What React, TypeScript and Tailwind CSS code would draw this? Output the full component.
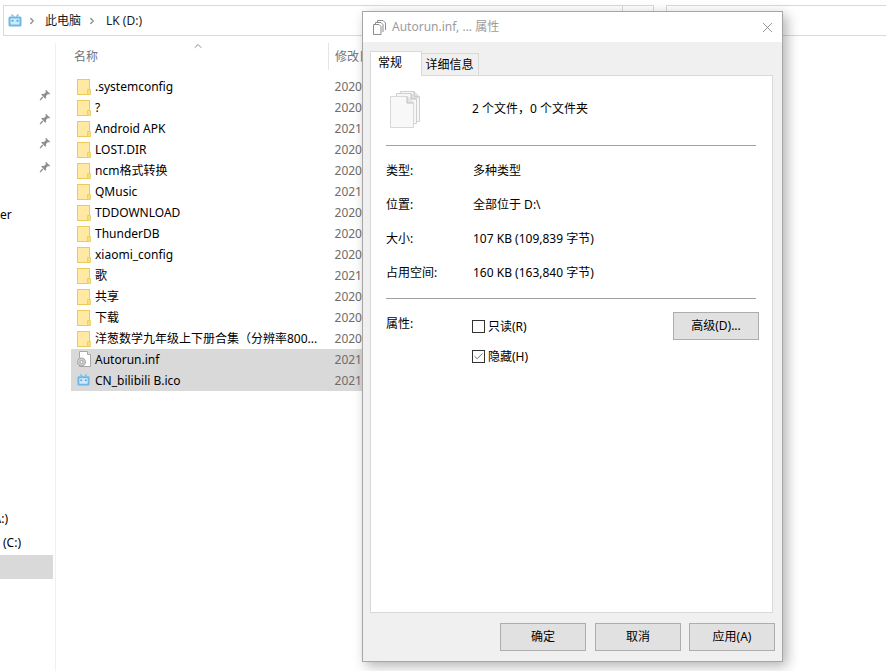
import { ChevronRight, ChevronUp, X, Check } from "lucide-react";
import React from "react";

const folders = [
  { name: ".systemconfig", date: "2020" },
  { name: "?", date: "2020" },
  { name: "Android APK", date: "2021" },
  { name: "LOST.DIR", date: "2020" },
  { name: "ncm格式转换", date: "2020" },
  { name: "QMusic", date: "2021" },
  { name: "TDDOWNLOAD", date: "2020" },
  { name: "ThunderDB", date: "2020" },
  { name: "xiaomi_config", date: "2020" },
  { name: "歌", date: "2021" },
  { name: "共享", date: "2020" },
  { name: "下载", date: "2020" },
  { name: "洋葱数学九年级上下册合集（分辨率800...", date: "2020" },
];

const details = [
  { label: "类型:", value: "多种类型" },
  { label: "位置:", value: "全部位于 D:\\" },
  { label: "大小:", value: "107 KB (109,839 字节)" },
  { label: "占用空间:", value: "160 KB (163,840 字节)" },
];

const BiliIcon = ({ size = 14 }: { size?: number }) => (
  <svg width={size} height={size} viewBox="0 0 14 14" fill="none">
    <path d="M3.5 0.5 L5.5 2.5 M10.5 0.5 L8.5 2.5" stroke="#6db8e6" strokeWidth="1.2" />
    <rect x="0.5" y="2.5" width="13" height="10" rx="1.5" fill="#6db8e6" />
    <rect x="2.5" y="4.5" width="9" height="6" fill="#cfe9f8" />
    <rect x="3.5" y="6" width="2" height="1.5" fill="#4a9fd8" />
    <rect x="8.5" y="6" width="2" height="1.5" fill="#4a9fd8" />
  </svg>
);

const FolderIcon = () => (
  <svg width="14" height="16" viewBox="0 0 14 16" fill="none">
    <rect x="0.5" y="0.5" width="12" height="15" fill="#ffe9a3" stroke="#eccb5b" />
    <path d="M10.5 15.5 V10.5 H13.5 V15.5 Z" fill="#f7dc82" stroke="#eccb5b" strokeWidth="0.8" />
  </svg>
);

const PinIcon = () => (
  <svg width="12" height="12" viewBox="0 0 12 12" fill="#8f8f8f">
    <path d="M7 0.8 L11.2 5 L10.2 5.6 L9 5 L7 7 L7.2 9 L6.4 9.8 L2.2 5.6 L3 4.8 L5 5 L7 3 L6.4 1.8 Z" />
    <path d="M4 8 L1 11" stroke="#8f8f8f" strokeWidth="1.2" />
  </svg>
);

const GearFileIcon = () => (
  <svg width="16" height="17" viewBox="0 0 16 17" fill="none">
    <path d="M3.5 0.5 H11.5 L14.5 3.5 V15.5 H3.5 Z" fill="#ffffff" stroke="#a8a8a8" />
    <path d="M11.5 0.5 V3.5 H14.5" stroke="#a8a8a8" fill="#eeeeee" />
    <circle cx="5.5" cy="11" r="4" fill="#cdcdcd" stroke="#8a8a8a" strokeDasharray="1.6 0.8" />
    <circle cx="5.5" cy="11" r="1.5" fill="#ffffff" stroke="#8a8a8a" strokeWidth="0.7" />
  </svg>
);

const CopyIcon = () => (
  <svg width="13" height="15" viewBox="0 0 13 15" fill="none" stroke="#8c8c8c">
    <path d="M0.5 4.5 H6 L8 6.5 V14.5 H0.5 Z" fill="#ffffff" />
    <path d="M2.5 4 V2.5 H8 L10 4.5 V12" />
    <path d="M4.5 2 V0.5 H10 L12.5 3 V10" />
  </svg>
);

const FilesIcon = () => (
  <svg width="31" height="37" viewBox="0 0 31 37" fill="none">
    <path d="M10.5 0.5 H24 L29.5 6 V30.5 H10.5 Z" fill="#f7f7f7" stroke="#d0d0d0" />
    <path d="M24 0.5 V6 H29.5" fill="#e2e2e2" stroke="#bdbdbd" />
    <path d="M6.5 2.5 H21 L26.5 8 V32.5 H6.5 Z" fill="#f7f7f7" stroke="#d0d0d0" />
    <path d="M21 2.5 V8 H26.5" fill="#e2e2e2" stroke="#bdbdbd" />
    <path d="M0.5 5.5 H17 L23.5 12 V36.5 H0.5 Z" fill="#f8f8f8" stroke="#d8d8d8" />
    <path d="M17 5.5 V12 H23.5" fill="#e4e4e4" stroke="#bdbdbd" />
  </svg>
);

const DialogButton = ({ label, className = "" }: { label: string; className?: string }) => (
  <button className={`h-[28px] w-[86px] bg-[#e1e1e1] border border-[#adadad] text-[12px] text-black ${className}`}>
    {label}
  </button>
);

const FileRow = ({
  icon,
  name,
  date,
  selected,
}: {
  icon: React.ReactNode;
  name: string;
  date: string;
  selected?: boolean;
}) => (
  <div className={`h-[21px] flex items-center ${selected ? "bg-[#d9d9d9]" : ""}`}>
    <div className="w-[24px] flex justify-center shrink-0 pl-[1px]">{icon}</div>
    <div className="w-[240px] text-black whitespace-nowrap">{name}</div>
    <div className="text-[#6d6d6d]">{date}</div>
  </div>
);

export default function App() {
  return (
    <div
      className="relative w-[886px] h-[671px] overflow-hidden bg-white text-[12px] leading-none text-black"
      style={{ fontFamily: '"Noto Sans", "Noto Sans CJK SC", sans-serif' }}
    >
      {/* address bar */}
      <div className="flex h-[43px] pt-[5px] pl-[3px]">
        <div className="w-[620px] h-[31px] border border-[#d9d9d9] flex items-center pl-[4px] text-[#1a1a1a]">
          <BiliIcon />
          <ChevronRight size={10} strokeWidth={3} className="text-[#8a8a8a] ml-[5px] mr-[8px]" />
          <span>此电脑</span>
          <ChevronRight size={10} strokeWidth={3} className="text-[#8a8a8a] ml-[6px] mr-[9px]" />
          <span>LK (D:)</span>
        </div>
        <div className="w-[31px] h-[31px] border border-l-0 border-[#d9d9d9]" />
        <div className="w-[220px] h-[31px] border border-r-0 border-[#d9d9d9] ml-[12px]" />
      </div>

      <div className="flex h-[628px]">
        {/* nav pane */}
        <div className="w-[56px] shrink-0 border-r border-[#f0f0f0] pt-[40px]">
          {[0, 1, 2, 3].map((i) => (
            <div key={i} className="h-[24px] flex items-center justify-end pr-[4px]">
              <PinIcon />
            </div>
          ))}
          <div className="h-[24px] mt-[24px] flex items-center text-black">er</div>
          <div className="h-[24px] mt-[280px] flex items-center justify-end pr-[47px] overflow-hidden whitespace-nowrap">
            A:)
          </div>
          <div className="h-[24px] flex items-center pl-[3px]">(C:)</div>
          <div className="h-[24px] w-[53px] bg-[#d9d9d9]" />
        </div>

        {/* file list */}
        <div className="w-[306px] shrink-0 pl-[15px]">
          <div className="relative h-[27px] flex items-center">
            <span className="pl-[3px] text-[#6a7583]">名称</span>
            <ChevronUp size={12} className="absolute left-[121px] top-[-3px] text-[#8a8a8a]" />
            <div className="absolute left-[257px] top-0 h-[27px] border-l border-[#e5e5e5] pl-[6px] flex items-center text-[#6a7583] whitespace-nowrap">
              修改日期
            </div>
          </div>
          <div className="pt-[6px]">
            {folders.map((f) => (
              <FileRow key={f.name} icon={<FolderIcon />} name={f.name} date={f.date} />
            ))}
            <FileRow icon={<GearFileIcon />} name="Autorun.inf" date="2021" selected />
            <FileRow icon={<BiliIcon size={13} />} name="CN_bilibili B.ico" date="2021" selected />
          </div>
        </div>
      </div>

      {/* properties window */}
      <div className="absolute left-[362px] top-[11px] w-[421px] h-[651px] flex flex-col border border-[#a6a6a6] bg-[#f0f0f0] shadow-[4px_4px_12px_rgba(0,0,0,0.3)]">
        <div className="h-[30px] bg-white flex items-center pl-[10px] shrink-0">
          <CopyIcon />
          <span className="ml-[6px] text-[#9c9c9c]">Autorun.inf, ... 属性</span>
          <X size={17} strokeWidth={1} className="ml-auto mr-[6px] text-[#6b6b6b]" />
        </div>

        <div className="flex items-end h-[34px] pl-[7px] shrink-0">
          <div className="relative z-10 w-[52px] h-[25px] bg-white border border-b-0 border-[#d9d9d9] pl-[7px] pt-[5px]">
            常规
          </div>
          <div className="w-[57px] h-[23px] bg-[#f0f0f0] border border-l-0 border-[#d9d9d9] flex items-center justify-center pr-[1px]">
            详细信息
          </div>
        </div>

        <div className="ml-[7px] mr-[9px] flex-1 bg-white border border-[#d9d9d9] mt-[-1px] px-[15px] pt-[15px]">
          <div className="h-[54px] flex">
            <div className="w-[86px] pl-[4px]">
              <FilesIcon />
            </div>
            <div className="pt-[12px]">2 个文件，0 个文件夹</div>
          </div>
          <div className="h-px bg-[#a0a0a0] w-[370px]" />
          <div className="grid grid-cols-[87px_1fr] auto-rows-[34px] items-center mt-[8px]">
            {details.map((d) => (
              <React.Fragment key={d.label}>
                <div>{d.label}</div>
                <div>{d.value}</div>
              </React.Fragment>
            ))}
          </div>
          <div className="h-px bg-[#a0a0a0] w-[370px] mt-[8px]" />
          <div className="flex mt-[13px] w-[373px]">
            <div className="w-[86px] pt-[6px]">属性:</div>
            <div className="flex flex-col gap-[17px] pt-[8px]">
              <label className="flex items-center gap-[3px]">
                <span className="w-[13px] h-[13px] border border-[#333333] bg-white" />
                只读(R)
              </label>
              <label className="flex items-center gap-[3px]">
                <span className="w-[13px] h-[13px] border border-[#333333] bg-white flex items-center justify-center">
                  <Check size={11} strokeWidth={1.5} className="text-[#333333]" />
                </span>
                隐藏(H)
              </label>
            </div>
            <DialogButton label="高级(D)..." className="ml-auto" />
          </div>
        </div>

        <div className="h-[48px] shrink-0 flex pl-[137px] pt-[10px] gap-[9px]">
          <DialogButton label="确定" />
          <DialogButton label="取消" />
          <DialogButton label="应用(A)" className="ml-[-1px]" />
        </div>
      </div>
    </div>
  );
}
